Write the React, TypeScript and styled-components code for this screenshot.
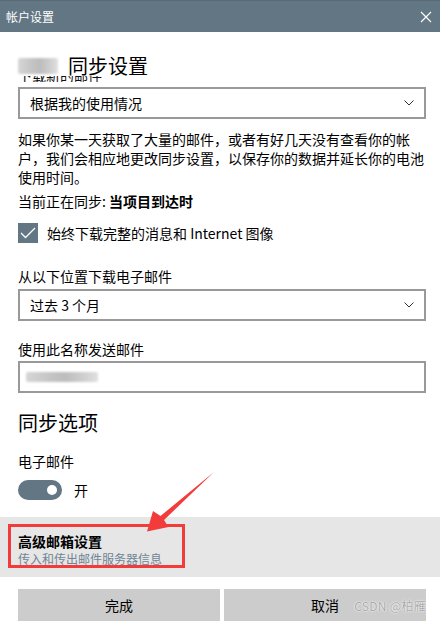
import React from "react";
import styled, { createGlobalStyle } from "styled-components";

const Global = createGlobalStyle`
  html, body { margin: 0; padding: 0; background: #ffffff; }
  body { font-family: "Noto Sans CJK SC", "Noto Sans", sans-serif; color: #000; }
`;

const Page = styled.div`
  position: relative;
  width: 440px;
  height: 629px;
  overflow: hidden;
  display: flex;
  flex-direction: column;
  background: #fff;
`;

const TitleBar = styled.div`
  height: 32px;
  background: #627683;
  border-top: 1px solid #566a77;
  box-sizing: border-box;
  display: flex;
  align-items: center;
  justify-content: space-between;
  padding: 0 8px 0 6px;
  color: #fff;
  font-size: 12px;
`;

const Content = styled.div`
  display: flex;
  flex-direction: column;
  padding: 0 14px 0 18px;
`;

const Heading = styled.div<{ $top: number }>`
  margin-top: ${(p) => p.$top}px;
  font-size: 20px;
  line-height: 20px;
  height: 20px;
  display: flex;
  align-items: center;
  position: relative;
  z-index: 1;
`;

const HeadingTall = styled.div<{ $top: number }>`
  margin-top: ${(p) => p.$top}px;
  font-size: 20px;
  line-height: 28px;
`;

const Blur = styled.span<{ $w: number; $h: number; $mr: number }>`
  display: inline-block;
  width: ${(p) => p.$w}px;
  height: ${(p) => p.$h}px;
  margin-right: ${(p) => p.$mr}px;
  background: linear-gradient(90deg, #d6d6d6 0%, #c4c4c4 35%, #bdbdbd 55%, #cfcfcf 80%, #e0e0e0 100%);
  filter: blur(1.2px);
  border-radius: 2px;
`;

const Clip = styled.div`
  height: 6px;
  overflow: hidden;
`;

const ClipText = styled.div`
  margin-top: -8px;
  font-size: 14px;
  line-height: 14px;
  color: #111;
`;

const Select = styled.div<{ $top: number }>`
  margin-top: ${(p) => p.$top}px;
  height: 32px;
  box-sizing: border-box;
  border: 2px solid #999999;
  display: flex;
  align-items: center;
  justify-content: space-between;
  padding: 0 10px 0 10px;
  font-size: 14px;
`;

const Label = styled.div<{ $top: number }>`
  margin-top: ${(p) => p.$top}px;
  font-size: 14px;
  line-height: 20px;
`;

const Para = styled.div`
  margin-top: 11px;
  font-size: 14px;
  line-height: 19px;
`;

const Bold = styled.span`
  font-weight: 700;
`;

const CheckRow = styled.div`
  margin-top: 12px;
  display: flex;
  align-items: center;
  gap: 9px;
  font-size: 14px;
  height: 20px;
`;

const Box = styled.div`
  width: 20px;
  height: 20px;
  background: #627683;
  display: flex;
  align-items: center;
  justify-content: center;
`;

const Input = styled.div`
  margin-top: 2px;
  height: 32px;
  box-sizing: border-box;
  border: 2px solid #999999;
  display: flex;
  align-items: center;
  padding-left: 6px;
`;

const ToggleRow = styled.div`
  margin-top: 9px;
  display: flex;
  align-items: center;
  gap: 12px;
  height: 20px;
  font-size: 14px;
`;

const Toggle = styled.div`
  width: 44px;
  height: 20px;
  border-radius: 10px;
  background: #627683;
  display: flex;
  align-items: center;
  justify-content: flex-end;
  padding-right: 5px;
  box-sizing: border-box;
`;

const Knob = styled.div`
  width: 10px;
  height: 10px;
  border-radius: 50%;
  background: #fff;
`;

const Panel = styled.div`
  margin-top: 17px;
  background: #e6e6e6;
  padding: 15px 18px 9px;
  display: flex;
  flex-direction: column;
`;

const PanelTitle = styled.div`
  font-size: 14px;
  line-height: 18px;
  font-weight: 700;
`;

const PanelSub = styled.div`
  font-size: 12px;
  line-height: 18px;
  color: #6e8594;
`;

const Buttons = styled.div`
  margin-top: 12px;
  padding: 0 14px 0 18px;
  display: grid;
  grid-template-columns: 1fr 1fr;
  gap: 4px;
`;

const Button = styled.div`
  height: 32px;
  background: #cccccc;
  display: flex;
  align-items: center;
  justify-content: center;
  font-size: 14px;
`;

const RedBox = styled.div`
  position: absolute;
  left: 8px;
  top: 524px;
  width: 177px;
  height: 44px;
  box-sizing: border-box;
  border: 3px solid #f23c3c;
  pointer-events: none;
`;

const ArrowLayer = styled.svg`
  position: absolute;
  left: 0;
  top: 0;
  pointer-events: none;
`;

const Watermark = styled.div`
  position: absolute;
  right: 14px;
  top: 597px;
  font-size: 12px;
  line-height: 18px;
  color: #a8a8a8;
  text-shadow: 0 0 2px #fff, 0 0 1px #fff;
  letter-spacing: 0.3px;
`;

const Chevron = () => (
  <svg width="10" height="6" viewBox="0 0 10 6">
    <path d="M0.5 0.5 L5 5 L9.5 0.5" fill="none" stroke="#333" strokeWidth="1" />
  </svg>
);

export default function App() {
  return (
    <Page>
      <Global />
      <TitleBar>
        <span>帐户设置</span>
        <svg width="12" height="12" viewBox="0 0 12 12">
          <path d="M1 1 L11 11 M11 1 L1 11" stroke="#fff" strokeWidth="1.2" />
        </svg>
      </TitleBar>
      <Content>
        <Heading $top={24}>
          <Blur $w={40} $h={16} $mr={10} />
          同步设置
        </Heading>
        <Clip>
          <ClipText>下载新的邮件</ClipText>
        </Clip>
        <Select $top={5}>
          <span>根据我的使用情况</span>
          <Chevron />
        </Select>
        <Para>
          如果你某一天获取了大量的邮件，或者有好几天没有查看你的帐
          <br />
          户，我们会相应地更改同步设置，以保存你的数据并延长你的电池
          <br />
          使用时间。
        </Para>
        <Label $top={4}>
          当前正在同步: <Bold>当项目到达时</Bold>
        </Label>
        <CheckRow>
          <Box>
            <svg width="16" height="12" viewBox="0 0 16 12">
              <path d="M1 6 L5.5 10.5 L15 1" fill="none" stroke="#fff" strokeWidth="1.3" />
            </svg>
          </Box>
          <span>始终下载完整的消息和 Internet 图像</span>
        </CheckRow>
        <Label $top={23}>从以下位置下载电子邮件</Label>
        <Select $top={3}>
          <span>过去 3 个月</span>
          <Chevron />
        </Select>
        <Label $top={18}>使用此名称发送邮件</Label>
        <Input>
          <Blur $w={72} $h={10} $mr={0} />
        </Input>
        <HeadingTall $top={16}>同步选项</HeadingTall>
        <Label $top={14}>电子邮件</Label>
        <ToggleRow>
          <Toggle>
            <Knob />
          </Toggle>
          <span>开</span>
        </ToggleRow>
      </Content>
      <Panel>
        <PanelTitle>高级邮箱设置</PanelTitle>
        <PanelSub>传入和传出邮件服务器信息</PanelSub>
      </Panel>
      <Buttons>
        <Button>完成</Button>
        <Button>取消</Button>
      </Buttons>
      <RedBox />
      <ArrowLayer width="440" height="629" viewBox="0 0 440 629">
        <polygon
          points="214,472 164,520 168.5,527 147,531.5 153,511 160.5,516"
          fill="#f23c3c"
        />
      </ArrowLayer>
      <Watermark>CSDN @柏雁</Watermark>
    </Page>
  );
}
